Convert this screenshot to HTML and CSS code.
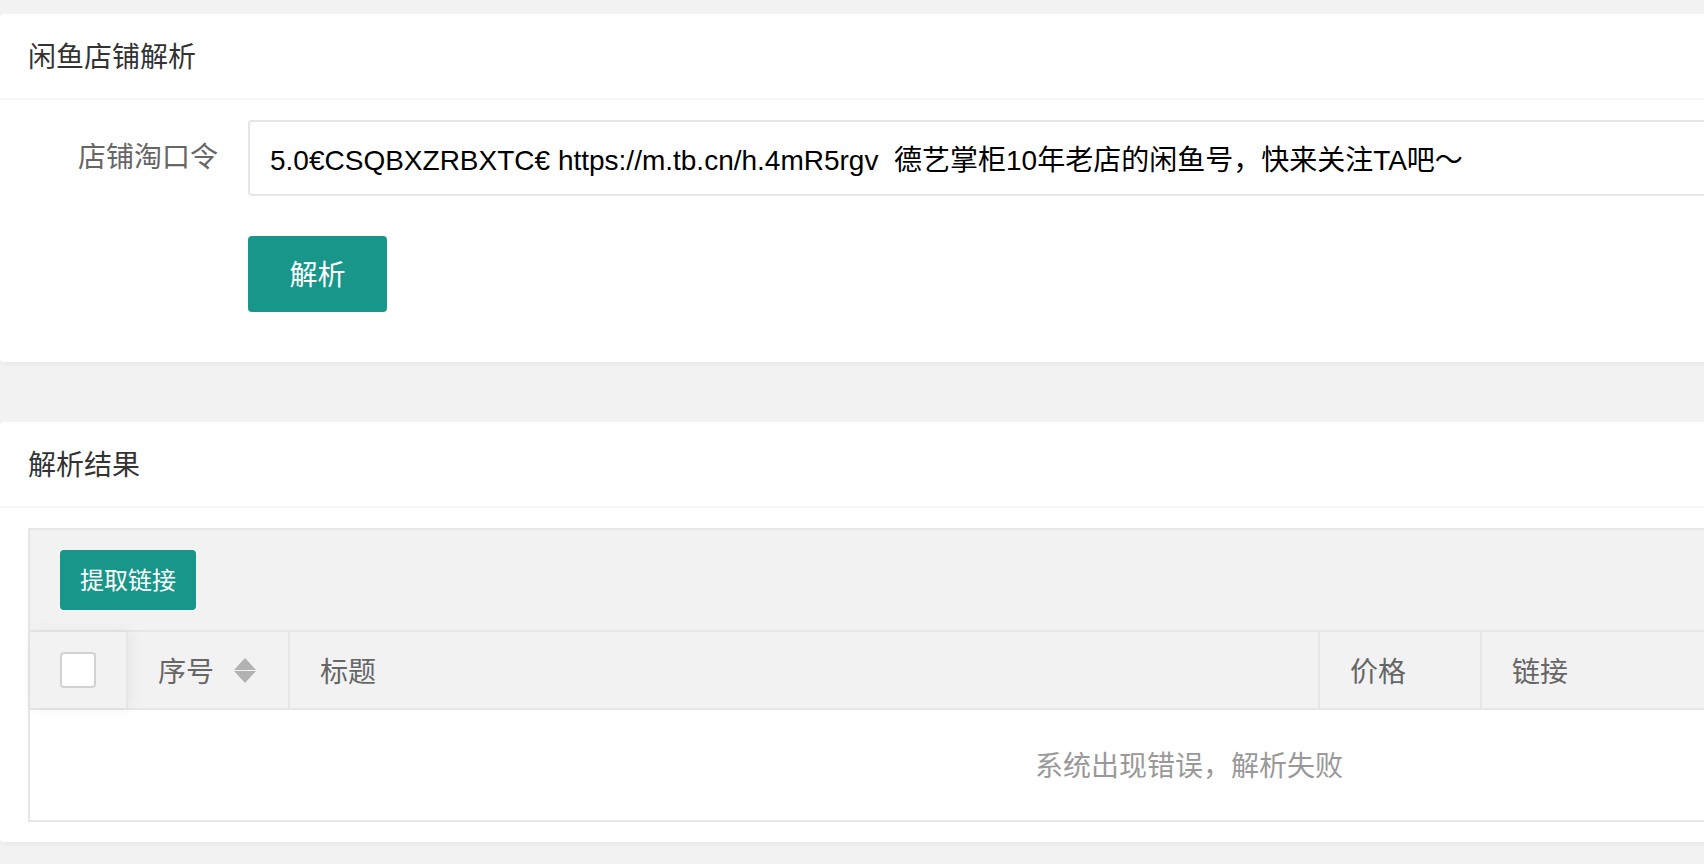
FILE: index.html
```html
<!DOCTYPE html>
<html lang="zh-CN">
<head>
<meta charset="utf-8">
<title>闲鱼店铺解析</title>
<link rel="stylesheet" href="styles.css">
</head>
<body>
<div class="page">
  <section class="card">
    <div class="card-header">闲鱼店铺解析</div>
    <div class="card-body form-body">
      <div class="form-item">
        <label class="form-label" for="token">店铺淘口令</label>
        <div class="input-block">
          <input id="token" class="input" type="text" value="5.0€CSQBXZRBXTC€ https://m.tb.cn/h.4mR5rgv  德艺掌柜10年老店的闲鱼号，快来关注TA吧～">
        </div>
      </div>
      <div class="form-actions">
        <button class="btn" type="button">解析</button>
      </div>
    </div>
  </section>
  <section class="card">
    <div class="card-header">解析结果</div>
    <div class="card-body table-wrap">
      <div class="table-box">
        <div class="table-tool">
          <button class="btn btn-sm" type="button">提取链接</button>
        </div>
        <div class="table-head">
          <div class="th th-check"><span class="checkbox"></span></div>
          <div class="th th-index">序号<svg class="sort" width="22" height="25" viewBox="0 0 22 25"><polygon points="11,0 22,12 0,12" fill="#b2b2b2"/><polygon points="0,13 22,13 11,25" fill="#b2b2b2"/></svg></div>
          <div class="th th-title">标题</div>
          <div class="th th-price">价格</div>
          <div class="th th-link">链接</div>
        </div>
        <div class="table-none">系统出现错误，解析失败</div>
      </div>
    </div>
  </section>
</div>
</body>
</html>
```
FILE: styles.css
```css
html, body {
  margin: 0;
  padding: 0;
}
body {
  background: #f2f2f2;
  font-family: "Liberation Sans", "Noto Sans CJK SC", sans-serif;
  color: #333;
  overflow: hidden;
}
.page {
  width: 2378px;
  padding-top: 14px;
}
.card {
  background: #fff;
  border-radius: 4px;
  box-shadow: 0 2px 4px rgba(0, 0, 0, 0.05);
  margin-bottom: 60px;
}
.card-header {
  height: 84px;
  line-height: 88px;
  padding: 0 28px;
  font-size: 28px;
  color: #333;
  border-bottom: 2px solid #f6f6f6;
}
.form-body {
  padding: 20px 28px 50px;
}
.form-item {
  display: flex;
  align-items: center;
}
.form-label {
  flex: none;
  width: 190px;
  padding-right: 30px;
  text-align: right;
  font-size: 28px;
  line-height: 40px;
  color: #666;
}
.input-block {
  flex: 1;
}
.input {
  box-sizing: border-box;
  display: block;
  width: 100%;
  height: 76px;
  border: 2px solid #e6e6e6;
  border-radius: 4px;
  padding: 0 20px;
  font-family: "Liberation Sans", "Noto Sans CJK SC", sans-serif;
  font-size: 28px;
  color: #000;
  background: #fff;
  outline: none;
}
.form-actions {
  margin-top: 40px;
  padding-left: 220px;
  display: flex;
}
.btn {
  display: block;
  box-sizing: border-box;
  height: 76px;
  line-height: 80px;
  padding: 0 41.5px;
  border: 0;
  border-radius: 4px;
  background: #179689;
  color: #fff;
  font-family: "Liberation Sans", "Noto Sans CJK SC", sans-serif;
  font-size: 28px;
  overflow: hidden;
}
.btn-sm {
  height: 60px;
  line-height: 62px;
  padding: 0 20px;
  font-size: 24px;
}
.table-wrap {
  padding: 20px 28px;
}
.table-box {
  border: 2px solid #e6e6e6;
}
.table-tool {
  display: flex;
  background: #f2f2f2;
  padding: 20px 30px;
  border-bottom: 2px solid #e6e6e6;
}
.table-head {
  display: flex;
  height: 76px;
  background: #f2f2f2;
  border-bottom: 2px solid #e6e6e6;
}
.th {
  box-sizing: border-box;
  flex: none;
  display: flex;
  align-items: center;
  padding: 0 30px;
  font-size: 28px;
  color: #666;
  border-right: 2px solid #e6e6e6;
}
.th-check {
  width: 98px;
  position: relative;
  z-index: 1;
  background: #f2f2f2;
  box-shadow: 2px 0 14px rgba(0, 0, 0, 0.06);
}
.checkbox {
  box-sizing: border-box;
  display: block;
  width: 36px;
  height: 36px;
  border: 2px solid #d2d2d2;
  border-radius: 4px;
  background: #fff;
}
.th-index {
  width: 162px;
}
.sort {
  display: block;
  margin-left: 20px;
}
.th-title {
  width: 1030px;
}
.th-price {
  width: 162px;
}
.th-link {
  flex: 1;
  border-right: 0;
}
.table-none {
  padding: 32px 0 28px;
  line-height: 50px;
  text-align: center;
  font-size: 28px;
  color: #999;
}
```
